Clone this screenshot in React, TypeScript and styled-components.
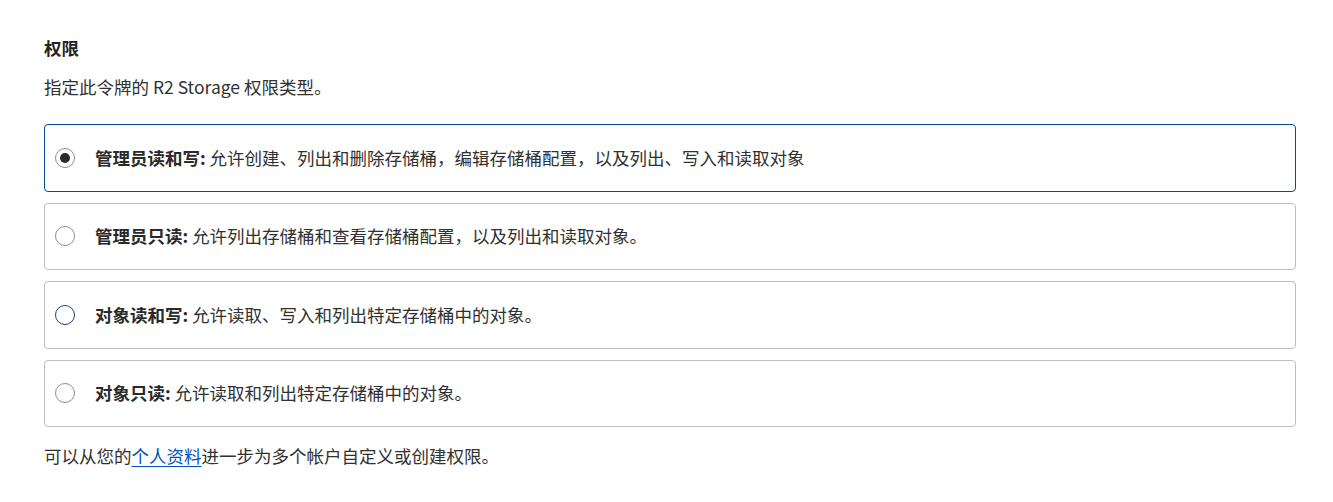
import React, { useState } from 'react'
import styled, { createGlobalStyle } from 'styled-components'

const GlobalStyle = createGlobalStyle`
  html, body {
    margin: 0;
    background: #ffffff;
  }
  body {
    font-family: "Noto Sans CJK SC", "Noto Sans", sans-serif;
    color: #313131;
  }
`

const Page = styled.div`
  padding: 34px 37px 0 44px;
`

const Title = styled.h3`
  margin: 0;
  font-size: 17.5px;
  font-weight: 700;
  line-height: 28px;
  color: #222;
`

const Description = styled.p`
  margin: 12px 0 24px;
  font-size: 17.5px;
  line-height: 26px;
`

const OptionList = styled.div`
  display: flex;
  flex-direction: column;
  gap: 11px;
`

const Option = styled.label<{ $selected: boolean }>`
  display: flex;
  align-items: center;
  gap: 20px;
  height: 67.5px;
  box-sizing: border-box;
  padding: 0 10px;
  border: 1px solid ${(p) => (p.$selected ? '#0a45a0' : '#bdbdbd')};
  border-radius: 4px;
  cursor: pointer;
  font-size: 17.5px;
`

const Radio = styled.span<{ $selected: boolean; $focus: boolean }>`
  position: relative;
  width: 20px;
  height: 20px;
  box-sizing: border-box;
  border-radius: 50%;
  border: 1px solid ${(p) => (p.$focus ? '#1b3f7a' : '#8e8e8e')};
  flex-shrink: 0;

  &::after {
    content: '';
    display: ${(p) => (p.$selected ? 'block' : 'none')};
    position: absolute;
    left: 4px;
    top: 4px;
    width: 10px;
    height: 10px;
    border-radius: 50%;
    background: #2a2a2a;
  }
`

const Label = styled.span`
  line-height: 26px;
`

const Strong = styled.strong`
  font-weight: 700;
  color: #2a2a2a;
`

const Footer = styled.p`
  margin: 16px 0 0;
  font-size: 17.5px;
  line-height: 26px;
`

const Link = styled.a`
  color: #0051c3;
  text-decoration: underline;
  text-underline-offset: 3px;
  text-decoration-thickness: 1px;
`

const options = [
  { title: '管理员读和写:', text: '允许创建、列出和删除存储桶，编辑存储桶配置，以及列出、写入和读取对象' },
  { title: '管理员只读:', text: '允许列出存储桶和查看存储桶配置，以及列出和读取对象。' },
  { title: '对象读和写:', text: '允许读取、写入和列出特定存储桶中的对象。' },
  { title: '对象只读:', text: '允许读取和列出特定存储桶中的对象。' },
]

export default function App() {
  const [selected, setSelected] = useState(0)

  return (
    <>
      <GlobalStyle />
      <Page>
        <Title>权限</Title>
        <Description>指定此令牌的 R2 Storage 权限类型。</Description>
        <OptionList>
          {options.map((o, i) => (
            <Option key={o.title} $selected={selected === i} onClick={() => setSelected(i)}>
              <Radio $selected={selected === i} $focus={i === 2} />
              <Label>
                <Strong>{o.title}</Strong> {o.text}
              </Label>
            </Option>
          ))}
        </OptionList>
        <Footer>
          可以从您的<Link href="#">个人资料</Link>进一步为多个帐户自定义或创建权限。
        </Footer>
      </Page>
    </>
  )
}
